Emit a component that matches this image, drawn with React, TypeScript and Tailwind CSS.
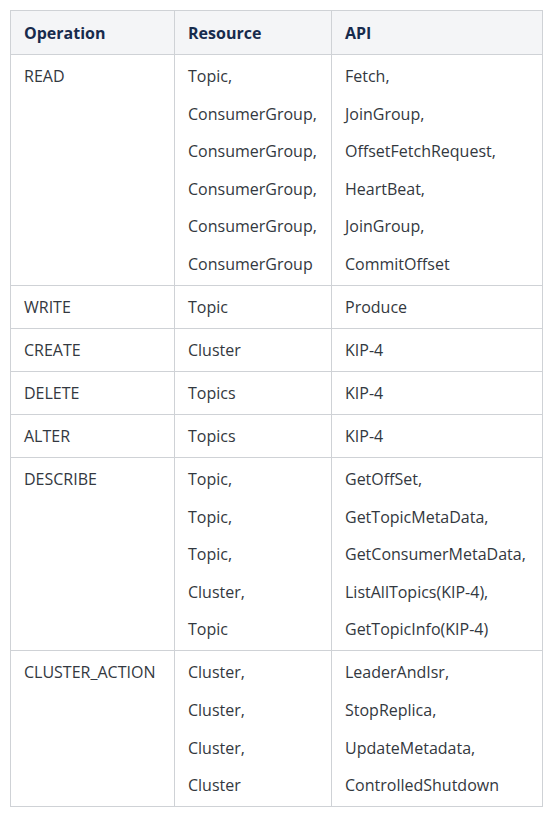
import React from 'react';

type Row = { op: string; res: string[]; api: string[] };

const rows: Row[] = [
  {
    op: 'READ',
    res: ['Topic,', 'ConsumerGroup,', 'ConsumerGroup,', 'ConsumerGroup,', 'ConsumerGroup,', 'ConsumerGroup'],
    api: ['Fetch,', 'JoinGroup,', 'OffsetFetchRequest,', 'HeartBeat,', 'JoinGroup,', 'CommitOffset'],
  },
  { op: 'WRITE', res: ['Topic'], api: ['Produce'] },
  { op: 'CREATE', res: ['Cluster'], api: ['KIP-4'] },
  { op: 'DELETE', res: ['Topics'], api: ['KIP-4'] },
  { op: 'ALTER', res: ['Topics'], api: ['KIP-4'] },
  {
    op: 'DESCRIBE',
    res: ['Topic,', 'Topic,', 'Topic,', 'Cluster,', 'Topic'],
    api: ['GetOffSet,', 'GetTopicMetaData,', 'GetConsumerMetaData,', 'ListAllTopics(KIP-4),', 'GetTopicInfo(KIP-4)'],
  },
  {
    op: 'CLUSTER_ACTION',
    res: ['Cluster,', 'Cluster,', 'Cluster,', 'Cluster'],
    api: ['LeaderAndIsr,', 'StopReplica,', 'UpdateMetadata,', 'ControlledShutdown'],
  },
];

const Lines = ({ items }: { items: string[] }) => (
  <div className="flex flex-col gap-[13.6px]">
    {items.map((t, i) => (
      <p key={i} className="leading-6">{t}</p>
    ))}
  </div>
);

export default function App() {
  return (
    <div className="w-[552px] h-[815px] bg-white pt-[10px] pl-[10px] font-['Open_Sans',sans-serif] text-[16px] text-[#333840]">
      <table className="w-[533px] border-collapse border border-[#cfd2d6] table-fixed">
        <colgroup>
          <col className="w-[164px]" />
          <col className="w-[157px]" />
          <col />
        </colgroup>
        <thead>
          <tr className="bg-[#f4f5f7]">
            <th className="border border-[#cfd2d6] text-left font-bold text-[#172b4d] px-[13px] pt-[10px] pb-[9px] leading-6">Operation</th>
            <th className="border border-[#cfd2d6] text-left font-bold text-[#172b4d] px-[13px] pt-[10px] pb-[9px] leading-6">Resource</th>
            <th className="border border-[#cfd2d6] text-left font-bold text-[#172b4d] px-[13px] pt-[10px] pb-[9px] leading-6">API</th>
          </tr>
        </thead>
        <tbody>
          {rows.map((r) => (
            <tr key={r.op}>
              <td className="border border-[#cfd2d6] align-top px-[13px] py-[9px]">
                <p className="leading-6">{r.op}</p>
              </td>
              <td className="border border-[#cfd2d6] align-top px-[13px] py-[9px]">
                <Lines items={r.res} />
              </td>
              <td className="border border-[#cfd2d6] align-top px-[13px] py-[9px]">
                <Lines items={r.api} />
              </td>
            </tr>
          ))}
        </tbody>
      </table>
    </div>
  );
}
